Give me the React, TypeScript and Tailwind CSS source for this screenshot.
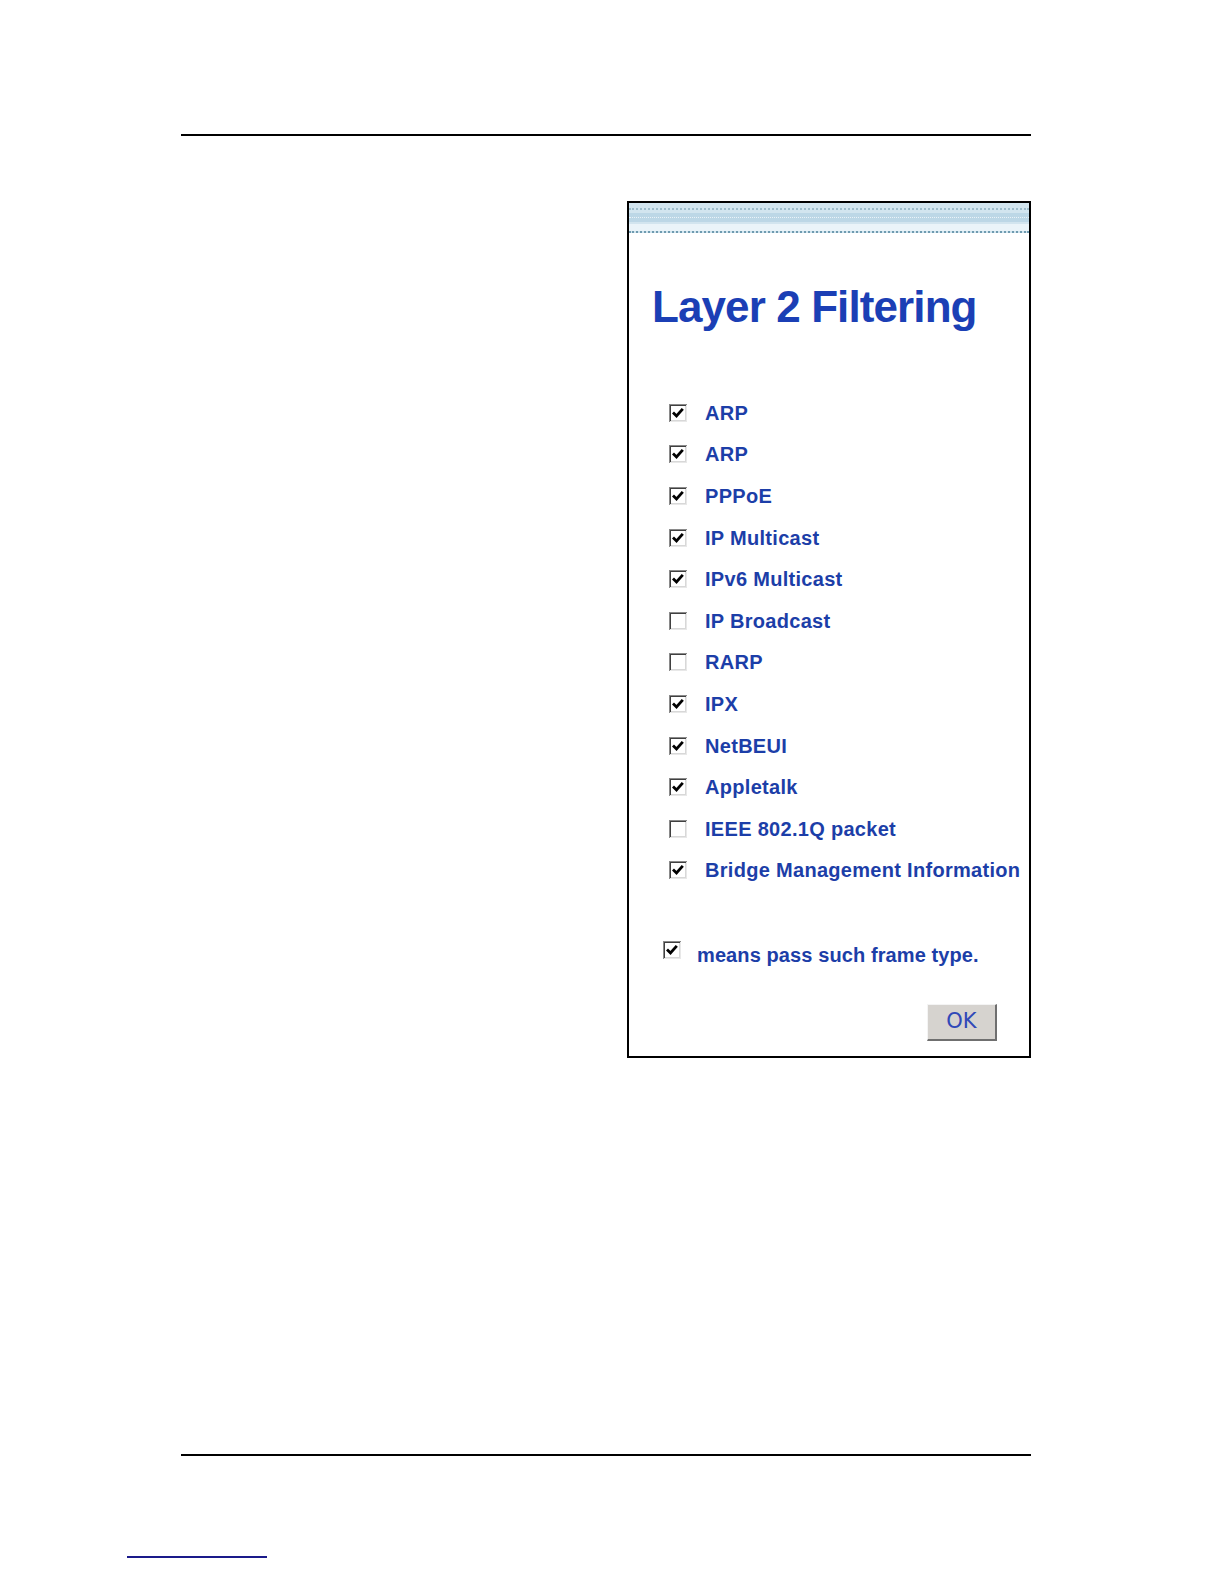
import React from 'react';

const ITEMS: { label: string; checked: boolean }[] = [
  { label: 'ARP', checked: true },
  { label: 'ARP', checked: true },
  { label: 'PPPoE', checked: true },
  { label: 'IP Multicast', checked: true },
  { label: 'IPv6 Multicast', checked: true },
  { label: 'IP Broadcast', checked: false },
  { label: 'RARP', checked: false },
  { label: 'IPX', checked: true },
  { label: 'NetBEUI', checked: true },
  { label: 'Appletalk', checked: true },
  { label: 'IEEE 802.1Q packet', checked: false },
  { label: 'Bridge Management Information', checked: true },
];

/* old-style sunken checkbox */
function Box({ checked }: { checked: boolean }) {
  return (
    <svg width="18" height="18" viewBox="0 0 18 18" className="shrink-0">
      <rect x="0" y="0" width="18" height="18" fill="#8a8a8a" />
      <rect x="1" y="1" width="17" height="17" fill="#e8e8e8" />
      <rect x="1" y="1" width="16" height="16" fill="#404040" />
      <rect x="2" y="2" width="15" height="15" fill="#d8d8d8" />
      <rect x="2" y="2" width="14" height="14" fill="#ffffff" />
      {checked && (
        <path d="M4 8.5 L7.5 12 L13.8 4.8" fill="none" stroke="#000" strokeWidth="2.8" />
      )}
    </svg>
  );
}

export default function App() {
  return (
    <div className="w-[1224px] h-[1584px] bg-white relative font-['Liberation_Sans',Arial,sans-serif]">
      {/* header rule */}
      <div className="pt-[134px] pl-[181px]">
        <div className="w-[850px] h-[2px] bg-black" />
      </div>

      {/* dialog capture */}
      <div className="mt-[65px] ml-[627px] w-[404px] h-[857px] border-2 border-black bg-white flex flex-col">
        <div className="h-[30px] bg-[#d2e5ef] relative border-b-2 border-dotted border-[#6f9bb0]">
          <div className="absolute left-0 right-0 top-[5px] border-t-2 border-dotted border-[#9dbccb]" />
          <div className="absolute left-0 right-0 top-[10px] h-[9px] bg-[#bcd7e6]" />
          <div className="absolute left-0 right-0 top-[14px] border-t border-dotted border-[#eaf3f8]" />
          <div className="absolute left-0 right-0 top-[21px] h-[7px] bg-[#eaf4f9]" />
        </div>

        <h1 className="mt-[51px] ml-[23px] text-[44px] leading-[46px] font-bold text-[#1b3fb5] tracking-[-0.9px]">
          Layer 2 Filtering
        </h1>

        <ul className="mt-[62px] ml-[40px] flex flex-col">
          {ITEMS.map((it, i) => (
            <li key={i} className="h-[41.6px] flex items-center gap-[18px]">
              <Box checked={it.checked} />
              <span className="text-[20px] font-bold text-[#1c3ea8] tracking-[0.3px]">{it.label}</span>
            </li>
          ))}
        </ul>

        <div className="mt-[49px] ml-[34px] flex items-center gap-[16px]">
          <div className="-mt-[10px]">
            <Box checked />
          </div>
          <span className="text-[20px] font-bold text-[#1c3ea8] tracking-[0.1px]">
            means pass such frame type.
          </span>
        </div>

        <div className="mt-[34px] flex justify-end pr-[32px]">
          <button className="w-[70px] h-[37px] bg-[#d6d3cf] border-t border-l border-[#f4f4f4] border-r-2 border-b-2 border-r-[#6f6f6f] border-b-[#6f6f6f] text-[21px] text-[#3048b8] font-['DejaVu_Sans',sans-serif] font-normal">
            OK
          </button>
        </div>
      </div>

      {/* footer rule */}
      <div className="mt-[396px] ml-[181px] w-[850px] h-[2px] bg-black" />

      <div className="mt-[100px] ml-[127px] w-[140px] h-[2px] bg-[#1a1a8a]" />
    </div>
  );
}
